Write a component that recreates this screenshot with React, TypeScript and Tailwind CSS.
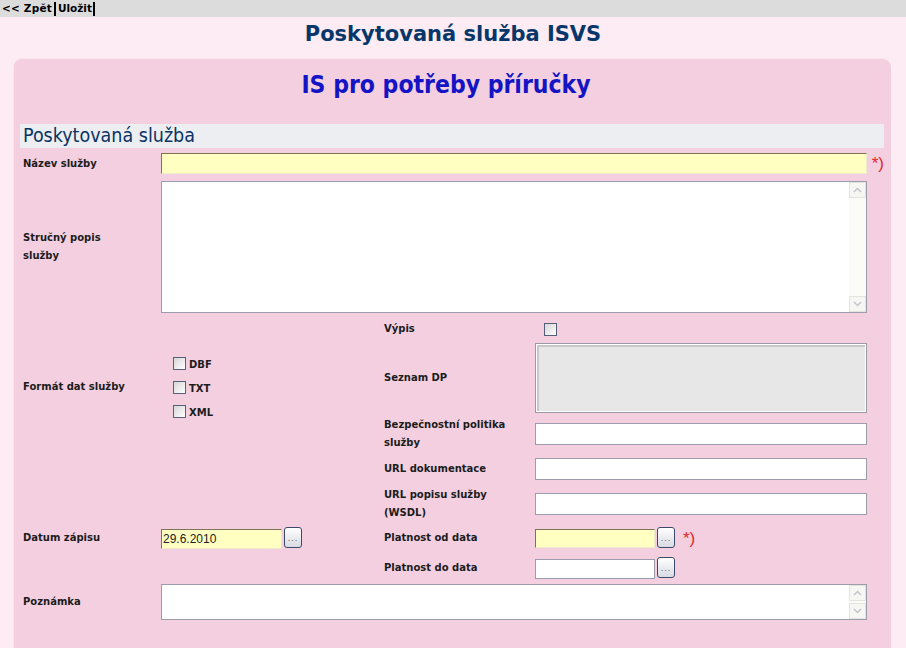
import React from "react";

const lbl =
  "font-['DejaVu_Sans',sans-serif] font-bold text-[10px] leading-[18px] text-[#1c1c1c]";

function Req() {
  return (
    <span className="ml-[5px] font-['Liberation_Sans',sans-serif] text-[17px] leading-[20px] text-[#e02a2a]">
      *)
    </span>
  );
}

function Dots() {
  return (
    <div className="w-[18px] h-[21px] rounded-[3px] border border-[#3b4a68] bg-gradient-to-b from-white to-[#d9dbe3] flex items-end justify-center pb-[4px]">
      <span className="font-['DejaVu_Sans',sans-serif] text-[8px] leading-[8px] tracking-[1px] text-[#5a6070]">
        ...
      </span>
    </div>
  );
}

function Check() {
  return (
    <div className="w-[13px] h-[13px] border border-[#56607a] bg-gradient-to-br from-[#d6d6d6] to-white" />
  );
}

function ScrollBox({ h }: { h: string }) {
  return (
    <div className={`w-[706px] ${h} border border-[#9c9cac] bg-white flex justify-end`}>
      <div className="w-[17px] bg-[#fbfbf8] flex flex-col justify-between">
        <div className="h-[16px] border border-[#e4e4de] bg-[#f6f6f2] flex items-center justify-center">
          <svg width="9" height="6" viewBox="0 0 9 6">
            <path d="M1 5 L4.5 1.5 L8 5" fill="none" stroke="#c4c4cc" strokeWidth="1.5" />
          </svg>
        </div>
        <div className="h-[16px] border border-[#e4e4de] bg-[#f6f6f2] flex items-center justify-center">
          <svg width="9" height="6" viewBox="0 0 9 6">
            <path d="M1 1 L4.5 4.5 L8 1" fill="none" stroke="#c4c4cc" strokeWidth="1.5" />
          </svg>
        </div>
      </div>
    </div>
  );
}

const yellow =
  "bg-[#ffffc2] border border-t-[#7d7356] border-l-[#7d7356] border-r-[#eeeacc] border-b-[#eeeacc]";
const white = "h-[22px] w-[332px] bg-white border border-[#9c9cac]";
const rlbl = `w-[140px] ${lbl}`;

export default function App() {
  return (
    <div className="min-h-screen bg-[#fdecf3] overflow-hidden">
      {/* toolbar */}
      <div className="h-[17px] bg-[#dcdcdc] flex items-center pl-[2px] font-['DejaVu_Sans',sans-serif] font-bold text-[10.5px] text-black">
        <span className="tracking-[0.2px]">&lt;&lt; Zpět</span>
        <span className="ml-[2px] w-[2px] h-[14px] bg-black" />
        <span className="ml-[2px]">Uložit</span>
        <span className="ml-[1px] w-[2px] h-[14px] bg-black" />
      </div>

      <div className="h-[41px] pt-[4px] text-center font-['DejaVu_Sans',sans-serif] font-bold text-[21px] leading-[26px] text-[#07376a]">
        Poskytovaná služba ISVS
      </div>

      {/* panel */}
      <div className="ml-[13px] w-[878px] rounded-t-[9px] bg-[#f3cfe0] border-t border-l border-[#fbe4ee] pl-[6px] pr-[7px] pb-[40px]">
        <div className="h-[52px] pr-[12px] flex items-center justify-center font-['DejaVu_Sans_Condensed',sans-serif] font-bold text-[24.5px] text-[#1414c4]">
          IS pro potřeby příručky
        </div>

        <div className="mt-[13px] h-[24px] bg-[#eceef2] flex items-center pl-[3px] font-['DejaVu_Sans_Condensed',sans-serif] text-[19.5px] text-[#0a3463]">
          Poskytovaná služba
        </div>

        <div className="pl-[3px]">
          {/* name */}
          <div className="mt-[5px] flex items-center">
            <div className={`w-[138px] ${lbl}`}>Název služby</div>
            <div className={`w-[706px] h-[21px] ${yellow}`} />
            <Req />
          </div>

          {/* description */}
          <div className="mt-[7px] flex items-center">
            <div className="w-[138px]">
              <div className={`w-[112px] ${lbl}`}>Stručný popis služby</div>
            </div>
            <ScrollBox h="h-[132px]" />
          </div>

          {/* two column block */}
          <div className="mt-[5px] grid grid-cols-[138px_223px_151px_1fr] grid-rows-[22px_76px_36px_34px_35px_33px_27px]">
            <div className={`col-start-1 row-start-1 row-span-3 self-center mt-[4px] ${lbl}`}>
              Formát dat služby
            </div>
            <div className="col-start-2 row-start-1 row-span-3 self-center mt-[4px] pl-[12px] flex flex-col">
              {["DBF", "TXT", "XML"].map((t) => (
                <div key={t} className="h-[24px] flex items-center gap-[3px]">
                  <Check />
                  <span className={`${lbl} mt-[3px]`}>{t}</span>
                </div>
              ))}
            </div>

            <div className={`col-start-3 row-start-1 self-center ${rlbl}`}>Výpis</div>
            <div className="col-start-4 row-start-1 self-center pl-[9px]">
              <Check />
            </div>

            <div className={`col-start-3 row-start-2 self-center ${rlbl}`}>Seznam DP</div>
            <div className="col-start-4 row-start-2 self-center">
              <div className="w-[332px] h-[70px] border border-[#9a9aa4] bg-[#e7e7e7] shadow-[inset_0_0_0_1px_#ffffff,inset_1px_1px_0_2px_#c8c8c8]" />
            </div>

            <div className={`col-start-3 row-start-3 self-center ${rlbl}`}>
              Bezpečnostní politika služby
            </div>
            <div className="col-start-4 row-start-3 self-center">
              <div className={white} />
            </div>

            <div className={`col-start-3 row-start-4 self-center ${rlbl}`}>URL dokumentace</div>
            <div className="col-start-4 row-start-4 self-center">
              <div className={white} />
            </div>

            <div className={`col-start-3 row-start-5 self-center ${rlbl}`}>
              URL popisu služby (WSDL)
            </div>
            <div className="col-start-4 row-start-5 self-center">
              <div className={white} />
            </div>

            <div className={`col-start-1 row-start-6 self-center ${lbl}`}>Datum zápisu</div>
            <div className="col-start-2 row-start-6 self-center flex items-center gap-[2px]">
              <div
                className={`w-[121px] h-[20px] mt-[2px] ${yellow} flex items-center pl-[1px] font-['Liberation_Sans',sans-serif] text-[12px] text-[#222]`}
              >
                29.6.2010
              </div>
              <Dots />
            </div>

            <div className={`col-start-3 row-start-6 self-center ${rlbl}`}>Platnost od data</div>
            <div className="col-start-4 row-start-6 self-center flex items-center">
              <div className={`w-[120px] h-[19px] mt-[2px] ${yellow}`} />
              <div className="ml-[2px]">
                <Dots />
              </div>
              <span className="ml-[3px]">
                <Req />
              </span>
            </div>

            <div className={`col-start-3 row-start-7 self-center ${rlbl}`}>Platnost do data</div>
            <div className="col-start-4 row-start-7 self-center flex items-center">
              <div className="w-[120px] h-[20px] mt-[2px] bg-white border border-[#9c9cac]" />
              <div className="ml-[2px]">
                <Dots />
              </div>
            </div>
          </div>

          {/* note */}
          <div className="mt-[3px] flex items-center">
            <div className={`w-[138px] ${lbl}`}>Poznámka</div>
            <ScrollBox h="h-[36px]" />
          </div>
        </div>
      </div>
    </div>
  );
}
